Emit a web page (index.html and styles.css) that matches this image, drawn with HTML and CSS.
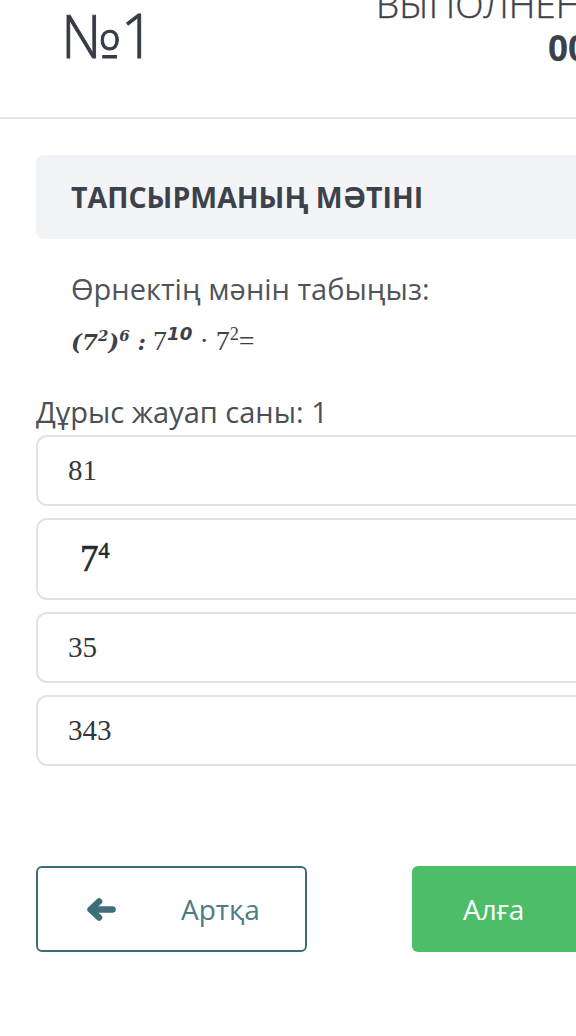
FILE: index.html
```html
<!DOCTYPE html>
<html lang="kk">
<head>
    <meta charset="UTF-8">
    <meta name="viewport" content="width=device-width, initial-scale=1.0">
    <title>Тапсырма №1</title>
    <link rel="stylesheet" href="styles.css">
</head>
<body>
<div class="header">
    <div class="task-number">№1</div>
    <div class="timer">
        <div class="timer-label">ВЫПОЛНЕНО</div>
        <div class="timer-value">00:00</div>
    </div>
</div>

<div class="content">
    <div class="task-title">ТАПСЫРМАНЫҢ МӘТІНІ</div>

    <div class="task-text">
        <p>Өрнектің мәнін табыңыз:</p>
        <p class="formula"><b><i>(7<sup>2</sup>)<sup>6</sup> :</i></b> 7<sup class="bold-sup">10</sup> · 7<sup>2</sup>=</p>
    </div>

    <div class="answers-count">Дұрыс жауап саны: 1</div>

    <div class="answers">
        <div class="answer">81</div>
        <div class="answer answer-tall"><span class="power">7<sup>4</sup></span></div>
        <div class="answer">35</div>
        <div class="answer">343</div>
    </div>

    <div class="nav">
        <button class="btn btn-back">
            <!-- arrow left -->
            <svg class="arrow" viewBox="0 0 29 23" width="29" height="23">
                <polyline points="12,3.5 3.5,11.5 12,19.5" fill="none" stroke="currentColor" stroke-width="6.5" stroke-linecap="round" stroke-linejoin="round"/>
                <line x1="5" y1="11.5" x2="25.5" y2="11.5" stroke="currentColor" stroke-width="6.5" stroke-linecap="round"/>
            </svg>
            <span>Артқа</span>
        </button>
        <button class="btn btn-next">Алға</button>
    </div>
</div>
</body>
</html>
```

FILE: styles.css
```css
html, body {
    overflow: hidden;
}

body {
    margin: 0;
    font-family: "Open Sans", Arial, sans-serif;
    background-color: #fff;
    color: #3f444c;
    width: 576px;
}

.header {
    display: flex;
    height: 117px;
    border-bottom: 2px solid #e7e7e7;
    overflow: hidden;
}

.task-number {
    font-size: 60px;
    font-weight: 300;
    line-height: 60px;
    letter-spacing: -1px;
    margin-left: 61px;
    margin-top: 5px;
    color: #363b43;
    -webkit-text-stroke: 0.9px #363b43;
}

.timer {
    margin-left: 222px;
    margin-top: -20px;
    white-space: nowrap;
}

.timer-label {
    font-size: 37px;
    font-weight: 300;
    line-height: 48px;
    color: #3d424a;
    -webkit-text-stroke: 0.4px #3d424a;
}

.timer-value {
    font-size: 35px;
    font-weight: 700;
    line-height: 40px;
    margin-left: 172px;
    color: #3d424a;
}

.content {
    padding-left: 36px;
    width: 640px;
}

.task-title {
    margin-top: 36px;
    height: 84px;
    background-color: #f3f4f7;
    border-radius: 8px;
    padding-left: 35px;
    font-size: 28.5px;
    font-weight: 700;
    line-height: 84px;
    color: #3d424a;
}

.task-text {
    padding-left: 35px;
    margin-top: 30px;
}

.task-text p {
    margin: 0;
    font-size: 29px;
    line-height: 40px;
    color: #4f545b;
}

.task-text .formula {
    margin-top: 10px;
    font-family: "Liberation Serif", "DejaVu Serif", serif;
    font-size: 28px;
    line-height: 44px;
    color: #3d424a;
}

.formula b {
    font-family: "DejaVu Serif", serif;
    font-size: 23px;
}

.formula sup {
    font-size: 0.65em;
    line-height: 0;
}

.formula .bold-sup {
    font-family: "DejaVu Sans", sans-serif;
    font-weight: 700;
    font-style: italic;
}

.answers-count {
    margin-top: 30px;
    font-size: 29px;
    line-height: 36px;
    color: #4a4f56;
}

.answers {
    display: flex;
    flex-direction: column;
    gap: 12px;
    margin-top: 5px;
}

.answer {
    height: 67px;
    border: 2px solid #e3e3e3;
    border-radius: 11px;
    padding-left: 30px;
    font-family: "Liberation Serif", "DejaVu Serif", serif;
    font-size: 29px;
    line-height: 67px;
    color: #33373d;
}

.answer-tall {
    height: 78px;
    line-height: 78px;
}

.power {
    font-size: 37px;
    padding-left: 12px;
    color: #25292e;
    -webkit-text-stroke: 0.6px #25292e;
}

.power sup {
    font-size: 0.6em;
    line-height: 0;
}

.nav {
    display: flex;
    gap: 105px;
    margin-top: 100px;
}

.btn {
    height: 86px;
    border-radius: 6px;
    font-family: "Open Sans", Arial, sans-serif;
    font-size: 28px;
    cursor: pointer;
    display: flex;
    align-items: center;
}

.btn-back {
    width: 271px;
    background-color: #fff;
    border: 2px solid #3f6d75;
    color: #4b7c84;
    padding-left: 49px;
}

.btn-back .arrow {
    color: #3e6f78;
    margin-right: 65px;
}

.btn-next {
    width: 200px;
    background-color: #4cbe67;
    border: none;
    color: #fff;
    padding-left: 51px;
}
```
